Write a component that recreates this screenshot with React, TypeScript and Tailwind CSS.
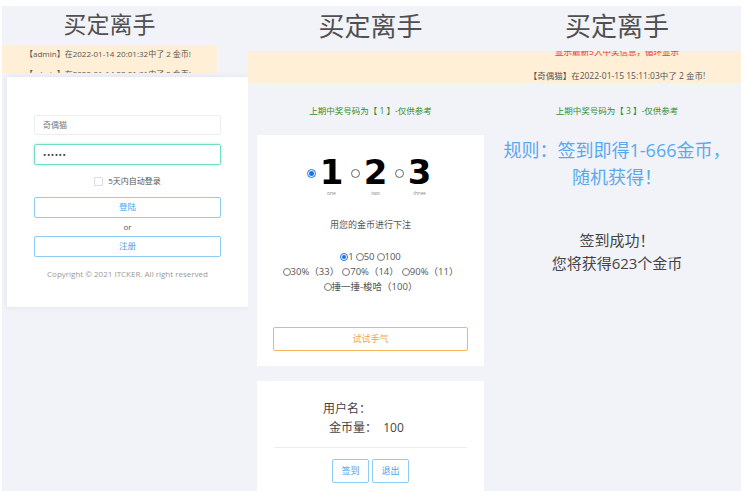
const cjk = "font-['Open_Sans','Noto_Sans_CJK_SC',sans-serif]";

function Radio({ on = false }: { on?: boolean }) {
  return on ? (
    <span className="inline-flex h-[8px] w-[8px] shrink-0 items-center justify-center rounded-full border border-[#1a73e8] bg-white align-middle">
      <span className="h-[4px] w-[4px] rounded-full bg-[#1a73e8]" />
    </span>
  ) : (
    <span className="inline-block h-[8px] w-[8px] shrink-0 rounded-full border border-[#777] bg-white align-middle" />
  );
}

function Pick({ n, label, on }: { n: string; label: string; on?: boolean }) {
  return (
    <div className="flex items-start">
      <span className="mt-[14px] inline-flex">
        {on ? (
          <span className="inline-flex h-[9px] w-[9px] items-center justify-center rounded-full border border-[#1a73e8] bg-white">
            <span className="h-[5px] w-[5px] rounded-full bg-[#1a73e8]" />
          </span>
        ) : (
          <span className="h-[9px] w-[9px] rounded-full border border-[#666] bg-white" />
        )}
      </span>
      <div className="ml-[7px] flex w-[18px] flex-col items-center">
        <span className="mt-[1px] h-[32px] font-['DejaVu_Sans',sans-serif] text-[34px] font-bold leading-[32px] text-black">{n}</span>
        <span className="mt-[2px] text-[5px] leading-[7px] text-[#888]">{label}</span>
      </div>
    </div>
  );
}

function Title({ big }: { big?: boolean }) {
  return big ? (
    <div className="h-[45px] text-center text-[26px] leading-[40px] text-[#505050]">买定离手</div>
  ) : (
    <div className="w-[215px] h-[39px] text-center text-[23px] leading-[36px] text-[#505050]">买定离手</div>
  );
}

function LoginColumn() {
  return (
    <div className="w-[246px] shrink-0 bg-[#f2f3f8]">
      <Title />
      <div className="h-[28px] w-[215px] overflow-hidden bg-[#feefd6] pl-[23px] text-[8px] leading-[18px] text-[#555]">
        <div>【admin】在2022-01-14 20:01:32中了 2 金币!</div>
        <div className="mt-[2px]">【admin】在2022-01-14 20:01:31中了 2 金币!</div>
      </div>
      <div className="ml-[5px] mt-[4px] h-[230px] w-[241px] bg-white px-[27px] pt-[38px] shadow-[0_0_6px_rgba(0,0,0,0.08)]">
        <div className="flex h-[20px] items-center rounded-[2px] border border-[#eeeeee] pl-[8px] text-[8px] text-[#777]">奇偶猫</div>
        <div className="mt-[9px] flex h-[21px] items-center rounded-[2px] border border-[#74dcc2] pl-[8px] text-[9px] tracking-[0.5px] text-[#444] shadow-[0_0_3px_rgba(80,210,180,0.5)]">
          ••••••
        </div>
        <div className="mt-[10px] flex h-[12px] items-center justify-center gap-[5px] text-[8px] text-[#555]">
          <span className="h-[9px] w-[9px] rounded-[1px] border border-[#ddd] bg-white" />
          <span>5天内自动登录</span>
        </div>
        <div className="mt-[10px] flex h-[21px] items-center justify-center rounded-[2px] border border-[#8ecbf5] text-[8.5px] text-[#46a3ee]">登陆</div>
        <div className="flex h-[18px] items-center justify-center text-[8px] text-[#555]">or</div>
        <div className="flex h-[21px] items-center justify-center rounded-[2px] border border-[#8ecbf5] text-[8.5px] text-[#46a3ee]">注册</div>
        <div className="-mx-[10px] mt-[11px] whitespace-nowrap text-center text-[8px] leading-[12px] text-[#999]">
          Copyright © 2021 ITCKER. All right reserved
        </div>
      </div>
    </div>
  );
}

function BetColumn() {
  return (
    <div className="w-[245px] shrink-0 bg-[#f2f3f8]">
      <Title big />
      <div className="h-[32px] bg-[#feefd6]" />
      <div className="mt-[21px] text-center text-[8.5px] leading-[14px] text-[#2f8f2f]">上期中奖号码为【 1 】-仅供参考</div>
      <div className="ml-[9px] mt-[17px] h-[231px] w-[227px] bg-white pt-[20px]">
        <div className="flex justify-center gap-[10px] pr-[6px]">
          <Pick n="1" label="one" on />
          <Pick n="2" label="two" />
          <Pick n="3" label="three" />
        </div>
        <div className="mt-[21px] text-center text-[9px] leading-[14px] text-[#555]">用您的金币进行下注</div>
        <div className="mt-[17px] text-center text-[9.5px] leading-[15px] text-[#555]">
          <div className="flex items-center justify-center">
            <Radio on />1 <span className="ml-[2px]" /><Radio />50 <span className="ml-[2px]" /><Radio />100
          </div>
          <div className="flex items-center justify-center">
            <Radio />30%（33）<span className="ml-[3px]" /><Radio />70%（14）<span className="ml-[3px]" /><Radio />90%（11）
          </div>
          <div className="flex items-center justify-center">
            <Radio />捶一捶-梭哈（100）
          </div>
        </div>
        <div className="mx-[16px] mt-[33px] flex h-[24px] items-center justify-center rounded-[2px] border border-[#f6b55e] text-[9px] text-[#f3a445]">
          试试手气
        </div>
      </div>
      <div className="ml-[9px] mt-[15px] h-[120px] w-[227px] bg-white pt-[17.5px]">
        <div className="pl-[66px] text-[12px] leading-[19px] text-[#444]">用户名：</div>
        <div className="pl-[72px] text-[12px] leading-[19px] text-[#444]">金币量：&nbsp;&nbsp;100</div>
        <div className="mx-[17px] mt-[10px] border-t border-[#eeeeee]" />
        <div className="mt-[11px] flex justify-center gap-[3px]">
          <div className="flex h-[24px] w-[37px] items-center justify-center rounded-[2px] border border-[#8ecbf5] text-[9px] text-[#46a3ee]">签到</div>
          <div className="flex h-[24px] w-[37px] items-center justify-center rounded-[2px] border border-[#8ecbf5] text-[9px] text-[#46a3ee]">退出</div>
        </div>
      </div>
    </div>
  );
}

function SignColumn() {
  return (
    <div className="w-[248px] shrink-0 bg-[#f2f3f8]">
      <Title big />
      <div className="h-[32px] overflow-hidden bg-[#feefd6] text-center text-[8.5px] leading-[18px] whitespace-nowrap">
        <div className="-mt-[8px] text-[#e8383d]">显示最新5入中奖信息，循环显示</div>
        <div className="mt-[6px] text-[#555]">【奇偶猫】在2022-01-15 15:11:03中了 2 金币!</div>
      </div>
      <div className="mt-[21px] text-center text-[8.5px] leading-[14px] text-[#2f8f2f]">上期中奖号码为【 3 】-仅供参考</div>
      <div className="mt-[18.5px] whitespace-nowrap text-center text-[18px] leading-[27px] text-[#5aa9ef]">
        <div>规则：签到即得1-666金币，</div>
        <div>随机获得！</div>
      </div>
      <div className="mt-[38px] text-center text-[15px] leading-[23px] text-[#444]">
        <div>签到成功！</div>
        <div>您将获得623个金币</div>
      </div>
    </div>
  );
}

export default function App() {
  return (
    <div className={`flex h-[491px] w-[747px] overflow-hidden bg-white pl-[2px] pt-[6px] ${cjk}`}>
      <LoginColumn />
      <BetColumn />
      <SignColumn />
    </div>
  );
}
